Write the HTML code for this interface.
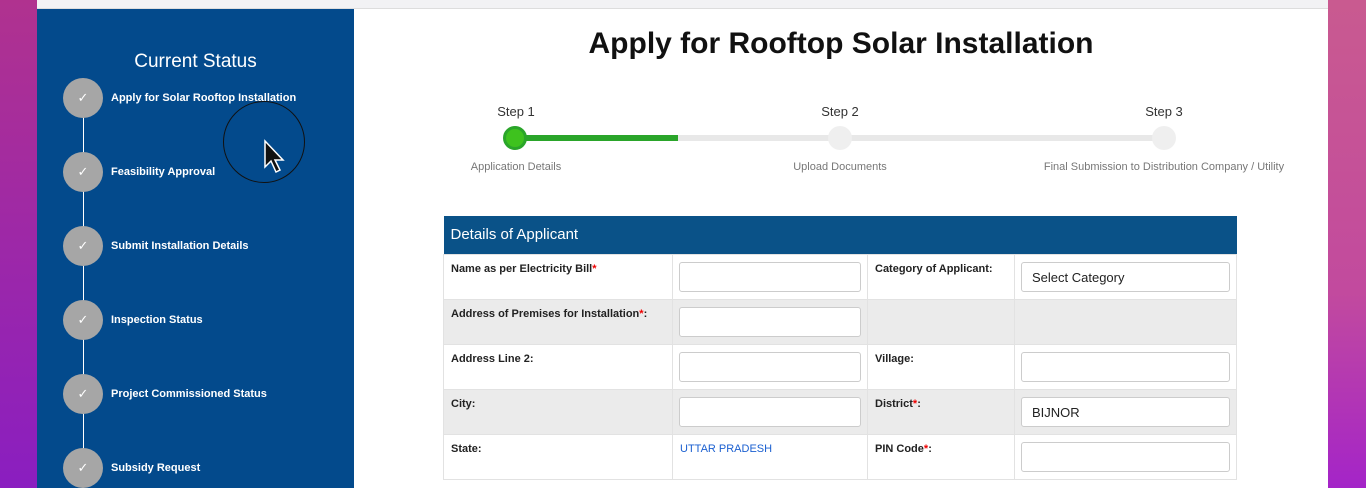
<!DOCTYPE html>
<html><head><style>
*{box-sizing:border-box;margin:0;padding:0}
body{width:1366px;height:488px;overflow:hidden;position:relative;font-family:"Liberation Sans",sans-serif;background:linear-gradient(180deg,#b0328f,#8a1ec0)}
.rbg{position:absolute;left:1328px;top:0;width:38px;height:488px;background:linear-gradient(180deg,#c95a90,#c24a9e 60%,#a424c8)}
.topbar{position:absolute;left:37px;top:0;width:1291px;height:9px;background:#f2f2f4;border-bottom:1px solid #ddd}
.side{position:absolute;left:37px;top:9px;width:317px;height:479px;background:#034a8c;color:#fff}
.main{position:absolute;left:354px;top:9px;width:974px;height:479px;background:#fff}
.side h2{position:absolute;left:0;width:317px;top:42px;text-align:center;font-weight:normal;font-size:19px}
.vline{position:absolute;left:46px;top:90px;width:1px;height:380px;background:#fff}
.c{position:absolute;left:26px;width:40px;height:40px;border-radius:50%;background:#a6a6a6;color:#fff;text-align:center;line-height:40px;font-size:13px}
.lbl{position:absolute;left:74px;font-size:11px;font-weight:bold}
h1{position:absolute;left:0;width:974px;top:18px;text-align:center;font-size:30px;color:#111}
.st{position:absolute;font-size:13px;color:#333;text-align:center;width:200px}
.sd{position:absolute;font-size:11px;color:#777;text-align:center;width:300px}
table{position:absolute;left:89px;top:207px;width:794px;border-collapse:collapse;font-size:11px;color:#222}
th{background:#0a5288;color:#fff;text-align:left;font-weight:normal;font-size:15px;height:38px;padding-left:7px}
td{border:1px solid #e2e2e2;height:44px;vertical-align:top;padding:8px 7px;font-weight:bold}
tr.g td{background:#ebebeb}
td.i{padding:7px 6px;font-weight:normal}
.in{height:30px;border:1px solid #ccc;border-radius:3px;background:#fff;font-size:13px;padding:7px 10px;color:#222}
.r{color:#e00}
</style></head><body>
<div class="rbg"></div>
<div class="topbar"></div>
<div class="side">
<h2>Current Status</h2>
<div class="vline"></div>
<div class="c" style="top:69px">✓</div><div class="lbl" style="top:83px">Apply for Solar Rooftop Installation</div>
<div class="c" style="top:143px">✓</div><div class="lbl" style="top:157px">Feasibility Approval</div>
<div class="c" style="top:217px">✓</div><div class="lbl" style="top:231px">Submit Installation Details</div>
<div class="c" style="top:291px">✓</div><div class="lbl" style="top:305px">Inspection Status</div>
<div class="c" style="top:365px">✓</div><div class="lbl" style="top:379px">Project Commissioned Status</div>
<div class="c" style="top:439px">✓</div><div class="lbl" style="top:453px">Subsidy Request</div>
<div style="position:absolute;left:186px;top:92px;width:82px;height:82px;border-radius:50%;border:1px solid #111"></div>
<svg style="position:absolute;left:226px;top:130px" width="22" height="36"><path d="M2 2 L2 28 L8 22 L13 33 L17 31 L12 21 L20 21 Z" fill="#111" stroke="#fff" stroke-width="1.5"/></svg>
</div>
<div class="main">
<h1>Apply for Rooftop Solar Installation</h1>
<div class="st" style="left:62px;top:95px">Step 1</div>
<div class="st" style="left:386px;top:95px">Step 2</div>
<div class="st" style="left:710px;top:95px">Step 3</div>
<div style="position:absolute;left:161px;top:126px;width:650px;height:6px;background:#e8e8e8"></div>
<div style="position:absolute;left:161px;top:126px;width:163px;height:6px;background:#2aa52a"></div>
<div style="position:absolute;left:149px;top:117px;width:24px;height:24px;border-radius:50%;background:#3ec21e;border:3px solid #2aa52a"></div>
<div style="position:absolute;left:474px;top:117px;width:24px;height:24px;border-radius:50%;background:#efefef"></div>
<div style="position:absolute;left:798px;top:117px;width:24px;height:24px;border-radius:50%;background:#efefef"></div>
<div class="sd" style="left:12px;top:152px">Application Details</div>
<div class="sd" style="left:336px;top:152px">Upload Documents</div>
<div class="sd" style="left:660px;top:152px;width:300px">Final Submission to Distribution Company / Utility</div>
<table>
<tr><th colspan="4">Details of Applicant</th></tr>
<tr><td style="width:229px">Name as per Electricity Bill<span class="r">*</span></td><td class="i" style="width:195px"><div class="in"></div></td><td style="width:147px">Category of Applicant:</td><td class="i"><div class="in">Select Category</div></td></tr>
<tr class="g"><td>Address of Premises for Installation<span class="r">*</span>:</td><td class="i"><div class="in"></div></td><td></td><td></td></tr>
<tr><td>Address Line 2:</td><td class="i"><div class="in"></div></td><td>Village:</td><td class="i"><div class="in"></div></td></tr>
<tr class="g"><td>City:</td><td class="i"><div class="in"></div></td><td>District<span class="r">*</span>:</td><td class="i"><div class="in">BIJNOR</div></td></tr>
<tr><td>State:</td><td style="color:#1a5fd0;font-weight:normal">UTTAR PRADESH</td><td>PIN Code<span class="r">*</span>:</td><td class="i"><div class="in"></div></td></tr>
</table>
</div>
</body></html>
